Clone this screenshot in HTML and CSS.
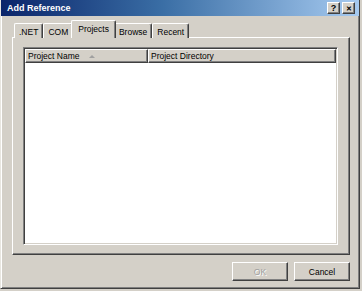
FILE: index.html
```html
<!DOCTYPE html>
<html>
<head>
<meta charset="utf-8">
<link rel="stylesheet" href="styles.css">
</head>
<body>
<div class="window">
  <div class="titlebar">
    <span class="title">Add Reference</span>
    <div class="caption-buttons">
      <span class="cap-btn help">?</span>
      <span class="cap-btn close">&#x2715;</span>
    </div>
  </div>
  <div class="content">
    <div class="tabs">
      <span class="tab">.NET</span>
      <span class="tab">COM</span>
      <span class="tab selected">Projects</span>
      <span class="tab">Browse</span>
      <span class="tab">Recent</span>
    </div>
    <div class="panel">
      <div class="listview">
        <div class="header">
          <div class="col col-name">Project Name <span class="sort"></span></div>
          <div class="col col-dir">Project Directory</div>
        </div>
        <div class="rows"></div>
      </div>
    </div>
    <div class="buttons">
      <span class="btn disabled">OK</span>
      <span class="btn">Cancel</span>
    </div>
  </div>
</div>
</body>
</html>
```
FILE: styles.css
```css
html, body {
  margin: 0;
  padding: 0;
  background: #d4d0c8;
}
body {
  font: 8.5px "Liberation Sans", Arial, sans-serif;
  color: #000;
}
.window {
  width: 360px;
  height: 289px;
  box-sizing: border-box;
  display: flex;
  flex-direction: column;
  background: #d4d0c8;
  border-left: 1px solid #e8e6e0;
  border-right: 1px solid #404040;
  border-bottom: 1px solid #404040;
  box-shadow: inset 1px 0 #fff, inset -1px -1px #808080;
  padding: 0 2px 2px 2px;
}
.titlebar {
  height: 16px;
  margin: 0 -2px 0 -2px;
  background: linear-gradient(to right, #0a246a 0%, #3a6ea5 45%, #a6caf0 100%);
  display: flex;
  align-items: center;
  justify-content: space-between;
  padding: 0 4px 0 6px;
}
.title {
  color: #fff;
  font-weight: bold;
  font-size: 9px;
}
.caption-buttons {
  display: flex;
  gap: 2px;
}
.cap-btn {
  width: 13px;
  height: 12px;
  box-sizing: border-box;
  background: #d4d0c8;
  border-top: 1px solid #fff;
  border-left: 1px solid #fff;
  border-right: 1px solid #404040;
  border-bottom: 1px solid #404040;
  box-shadow: inset -1px -1px #808080;
  display: flex;
  align-items: center;
  justify-content: center;
  font-weight: bold;
  font-size: 9px;
  line-height: 1;
  color: #000;
}
.cap-btn.close {
  font-size: 7px;
}
.content {
  flex: 1;
  display: flex;
  flex-direction: column;
  padding: 4px 7px 0 9px;
}
.tabs {
  display: flex;
  height: 18px;
  padding-left: 2px;
  align-items: flex-end;
  position: relative;
  z-index: 1;
  margin-bottom: -1px;
}
.tab {
  height: 15px;
  box-sizing: border-box;
  padding: 3px 4px 0 4px;
  border-top: 1px solid #fff;
  border-left: 1px solid #fff;
  border-right: 1px solid #404040;
  box-shadow: inset -1px 0 #808080;
  border-radius: 2px 2px 0 0;
  background: #d4d0c8;
  white-space: nowrap;
}
.tab.selected {
  height: 18px;
  margin: 0 -2px;
  padding: 3px 6px 0 6px;
  position: relative;
  z-index: 2;
}
.panel {
  flex: 1;
  display: flex;
  flex-direction: column;
  border-top: 1px solid #fff;
  border-left: 1px solid #fff;
  border-right: 1px solid #404040;
  border-bottom: 1px solid #404040;
  box-shadow: inset -1px -1px #808080;
  padding: 9px 11px 9px 10px;
}
.listview {
  flex: 1;
  display: flex;
  flex-direction: column;
  background: #fff;
  border-top: 1px solid #808080;
  border-left: 1px solid #808080;
  border-right: 1px solid #fff;
  border-bottom: 1px solid #fff;
  box-shadow: inset 1px 1px #404040, inset -1px -1px #d4d0c8;
  padding: 1px;
}
.header {
  display: flex;
  height: 14px;
}
.col {
  box-sizing: border-box;
  height: 14px;
  background: #d4d0c8;
  border-top: 1px solid #fff;
  border-left: 1px solid #fff;
  border-right: 1px solid #404040;
  border-bottom: 1px solid #404040;
  box-shadow: inset -1px -1px #808080;
  padding: 0 0 0 2px;
  white-space: nowrap;
  display: flex;
  align-items: center;
}
.col-name {
  width: 123px;
}
.col-dir {
  flex: 1;
}
.sort {
  display: inline-block;
  width: 0;
  height: 0;
  margin-left: 9px;
  border-left: 3px solid transparent;
  border-right: 3px solid transparent;
  border-bottom: 3px solid #a0a0a0;
}
.rows {
  flex: 1;
}
.buttons {
  display: flex;
  justify-content: flex-end;
  gap: 6px;
  padding: 7px 0 5px 0;
}
.btn {
  width: 56px;
  height: 19px;
  box-sizing: border-box;
  border-top: 1px solid #fff;
  border-left: 1px solid #fff;
  border-right: 1px solid #404040;
  border-bottom: 1px solid #404040;
  box-shadow: inset -1px -1px #808080;
  display: flex;
  align-items: center;
  justify-content: center;
  background: #d4d0c8;
}
.btn.disabled {
  color: #a0a0a0;
  text-shadow: 1px 1px #fff;
}
```
